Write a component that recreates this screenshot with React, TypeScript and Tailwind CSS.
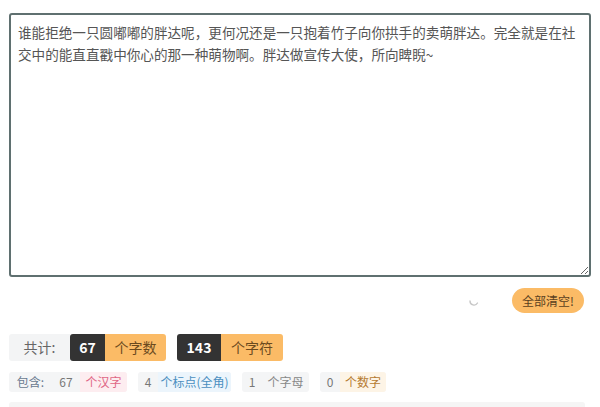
import { useState } from "react";

const FONT = { fontFamily: '"Noto Sans CJK SC", "Noto Sans", sans-serif' };

export default function App() {
  const [text, setText] = useState(
    "谁能拒绝一只圆嘟嘟的胖达呢，更何况还是一只抱着竹子向你拱手的卖萌胖达。完全就是在社交中的能直直戳中你心的那一种萌物啊。胖达做宣传大使，所向睥睨~"
  );

  return (
    <div className="min-h-screen bg-white px-[9px] pt-[13px] text-[#555]" style={FONT}>
      <textarea
        value={text}
        onChange={(e) => setText(e.target.value)}
        className="block h-[264px] w-full resize-y rounded-[3px] border-2 border-[#5f7070] px-[7px] pt-[6px] text-[13.6px] leading-[22px] text-[#555] outline-none"
        style={FONT}
      />

      <div className="mt-[11px] flex items-center justify-end gap-[32px] pr-[7px]">
        <svg width="12" height="12" viewBox="0 0 12 12" className="mt-[1px]">
          <path d="M2 6 A4 4 0 0 0 9.5 8" fill="none" stroke="#c8c8c8" strokeWidth="1.4" strokeLinecap="round" />
        </svg>
        <button className="h-[25px] w-[72px] rounded-full bg-[#fbbb66] text-[12px] text-[#5a4020]">
          全部清空!
        </button>
      </div>

      <div className="mt-[21px] flex h-[27px] items-stretch gap-[11px] text-[14px]">
        <div className="flex items-stretch">
          <span className="flex w-[61px] items-center justify-center rounded-l-[3px] bg-[#f3f4f5] text-[#666]">共计:</span>
          <span className="flex w-[35px] items-center justify-center rounded-l-[3px] bg-[#333] font-bold text-white">67</span>
          <span className="flex w-[61px] items-center justify-center rounded-r-[3px] bg-[#fbbb66] text-[#6b4a1e]">个字数</span>
        </div>
        <div className="flex items-stretch">
          <span className="flex w-[44px] items-center justify-center rounded-l-[3px] bg-[#333] font-bold text-white">143</span>
          <span className="flex w-[62px] items-center justify-center rounded-r-[3px] bg-[#fbbb66] text-[#6b4a1e]">个字符</span>
        </div>
      </div>

      <div className="mt-[11px] flex h-[20px] items-stretch gap-[11px] text-[12px]">
        <div className="flex items-stretch rounded-[3px] bg-[#f4f5f6]">
          <span className="flex w-[43px] items-center justify-center text-[#6a7a90]">包含:</span>
          <span className="flex w-[28px] items-center justify-center text-[#777]">67</span>
          <span className="flex w-[47px] items-center justify-center rounded-r-[3px] bg-[#fdedf0] text-[#e06685]">个汉字</span>
        </div>
        <div className="flex items-stretch rounded-[3px] bg-[#f4f5f6]">
          <span className="flex w-[20px] items-center justify-center text-[#777]">4</span>
          <span className="flex w-[73px] items-center justify-center rounded-r-[3px] bg-[#ecf5fc] text-[#4a8fc0]">个标点(全角)</span>
        </div>
        <div className="flex items-stretch rounded-[3px] bg-[#f4f5f6]">
          <span className="flex w-[20px] items-center justify-center text-[#777]">1</span>
          <span className="flex w-[47px] items-center justify-center text-[#888]">个字母</span>
        </div>
        <div className="flex items-stretch rounded-[3px] bg-[#f4f5f6]">
          <span className="flex w-[20px] items-center justify-center text-[#777]">0</span>
          <span className="flex w-[46px] items-center justify-center rounded-r-[3px] bg-[#fdf4e6] text-[#b57a30]">个数字</span>
        </div>
      </div>

      <div className="mt-[10px] h-[20px] w-[576px] rounded-t-[3px] bg-[#f5f5f5]" />
    </div>
  );
}
